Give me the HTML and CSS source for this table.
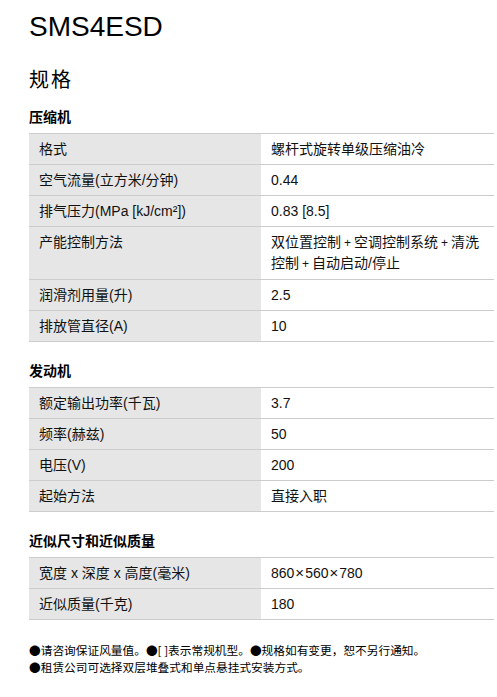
FILE: index.html
```html
<!DOCTYPE html>
<html lang="zh-CN">
<head>
<meta charset="utf-8">
<title>SMS4ESD</title>
<link rel="stylesheet" href="styles.css">
</head>
<body>
<div class="page">
  <h1 class="model">SMS4ESD</h1>
  <h2 class="spec-title">规格</h2>

  <h3 class="section">压缩机</h3>
  <table class="spec">
    <tr><th>格式</th><td>螺杆式旋转单级压缩油冷</td></tr>
    <tr><th>空气流量(立方米/分钟)</th><td>0.44</td></tr>
    <tr><th>排气压力(MPa [kJ/cm²])</th><td>0.83 [8.5]</td></tr>
    <tr><th>产能控制方法</th><td class="nowrap">双位置控制<span class="plus">+</span>空调控制系统<span class="plus">+</span>清洗<br>控制<span class="plus">+</span>自动启动/停止</td></tr>
    <tr><th>润滑剂用量(升)</th><td>2.5</td></tr>
    <tr><th>排放管直径(A)</th><td>10</td></tr>
  </table>

  <h3 class="section">发动机</h3>
  <table class="spec">
    <tr><th>额定输出功率(千瓦)</th><td>3.7</td></tr>
    <tr><th>频率(赫兹)</th><td>50</td></tr>
    <tr><th>电压(V)</th><td>200</td></tr>
    <tr><th>起始方法</th><td>直接入职</td></tr>
  </table>

  <h3 class="section">近似尺寸和近似质量</h3>
  <table class="spec">
    <tr><th>宽度 x 深度 x 高度(毫米)</th><td>860<span class="times">×</span>560<span class="times">×</span>780</td></tr>
    <tr><th>近似质量(千克)</th><td>180</td></tr>
  </table>

  <div class="notes">
    <p>●请咨询保证风量值。●[ ]表示常规机型。●规格如有变更，恕不另行通知。</p>
    <p>●租赁公司可选择双层堆叠式和单点悬挂式安装方式。</p>
  </div>
</div>
</body>
</html>
```

FILE: styles.css
```css
html, body {
  margin: 0;
  padding: 0;
  background: #fff;
}

body {
  font-family: "Liberation Sans", "Noto Sans CJK SC", sans-serif;
  color: #111;
}

.page {
  padding: 11px 3px 20px 29px;
}

.model {
  margin: 0;
  font-size: 28px;
  font-weight: normal;
  line-height: 32px;
  color: #000;
}

.spec-title {
  margin: 23px 0 0 0;
  font-size: 20px;
  font-weight: normal;
  line-height: 28px;
  letter-spacing: 2px;
  color: #000;
}

.section {
  margin: 13px 0 6px 0;
  font-size: 14px;
  font-weight: bold;
  line-height: 20px;
  color: #000;
}

.spec + .section {
  margin-top: 19px;
}

.spec {
  width: 465px;
  border-collapse: collapse;
  font-size: 14px;
  line-height: 20px;
}

.spec th,
.spec td {
  padding: 5px 10px 5px 10px;
  border-top: 1px solid #cccccc;
  border-bottom: 1px solid #cccccc;
  text-align: left;
  vertical-align: top;
  font-weight: normal;
}

.spec th {
  width: 212px;
  background: #e6e6e6;
  color: #111;
}

.spec td {
  background: #fff;
  color: #111;
}

.spec td.nowrap {
  white-space: nowrap;
  padding-right: 0;
}

.plus {
  display: inline-block;
  margin: 0 3px;
  font-size: 12px;
}

.times {
  display: inline-block;
  margin: 0 1px;
  font-size: 15px;
}

.notes {
  margin-top: 21px;
  font-family: "Noto Sans CJK SC", "Liberation Sans", sans-serif;
  font-size: 11.7px;
  line-height: 17px;
  color: #000;
}

.notes p {
  margin: 0;
}
```
